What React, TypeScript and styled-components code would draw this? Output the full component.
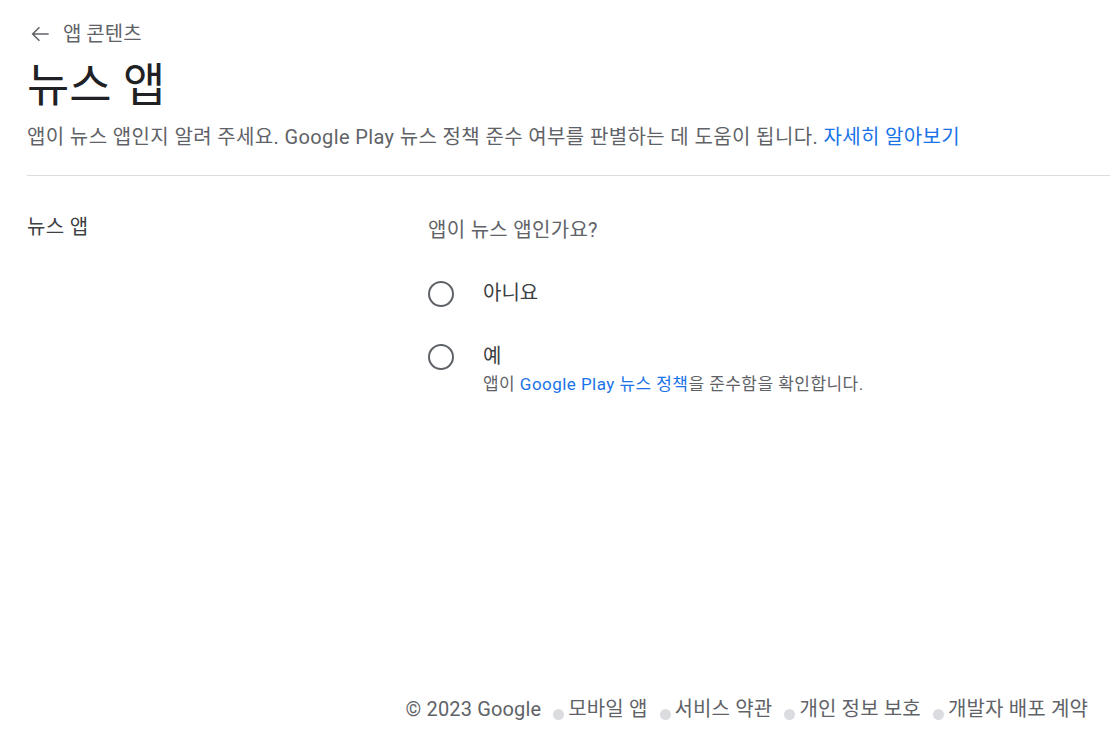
import React from "react";
import styled, { createGlobalStyle } from "styled-components";

const Global = createGlobalStyle`
  html, body { margin: 0; padding: 0; background: #fff; }
  body { font-family: Roboto, "Noto Sans CJK KR", sans-serif; color: #202124; }
  * { box-sizing: border-box; }
`;

const Page = styled.div`
  width: 1110px;
  height: 748px;
  display: flex;
  flex-direction: column;
  padding: 20px 0 0 27px;
`;

const Back = styled.a`
  display: flex;
  align-items: center;
  gap: 10px;
  color: #5f6368;
  font-size: 20px;
  line-height: 28px;
  text-decoration: none;
`;

const Title = styled.h1`
  margin: 9px 0 0;
  font-size: 46px;
  font-weight: 400;
  line-height: 56px;
  color: #202124;
`;

const Desc = styled.p`
  margin: 10px 0 0;
  font-size: 20px;
  line-height: 28px;
  letter-spacing: 0.37px;
  color: #5f6368;
`;

const Link = styled.a`
  color: #1a73e8;
  text-decoration: none;
`;

const Divider = styled.hr`
  margin: 24px 0 0;
  border: none;
  border-top: 1px solid #dadce0;
`;

const Section = styled.div`
  display: grid;
  grid-template-columns: 401px 1fr;
  padding-top: 37px;
`;

const Label = styled.div`
  font-size: 20px;
  line-height: 28px;
  letter-spacing: 0.3px;
  color: #3c4043;
`;

const Question = styled.div`
  font-size: 20px;
  line-height: 28px;
  letter-spacing: 0.3px;
  color: #5f6368;
  padding-top: 3px;
`;

const Options = styled.div`
  display: flex;
  flex-direction: column;
  gap: 36px;
  margin-top: 36px;
`;

const Option = styled.label`
  display: flex;
  align-items: flex-start;
  gap: 29px;
`;

const Circle = styled.span`
  width: 26px;
  height: 26px;
  border: 2px solid #5f6368;
  border-radius: 50%;
  flex: none;
  margin-top: 1px;
`;

const OptText = styled.div`
  display: flex;
  flex-direction: column;
`;

const OptLabel = styled.span`
  font-size: 20px;
  line-height: 26px;
  color: #3c4043;
`;

const OptHelp = styled.span`
  font-size: 17px;
  line-height: 20px;
  letter-spacing: 0.45px;
  color: #5f6368;
  margin-top: 5px;
`;

const Footer = styled.footer`
  margin-top: auto;
  display: flex;
  justify-content: flex-end;
  align-items: center;
  height: 28px;
  margin-bottom: 25px;
  padding-right: 22px;
  font-size: 20px;
  line-height: 28px;
  letter-spacing: 0.15px;
  color: #5f6368;
`;

const FootItem = styled.span``;

const Dot = styled.span`
  flex: none;
  width: 11px;
  height: 11px;
  border-radius: 50%;
  background: #dadce0;
  margin: 10px 4px 0 12px;
`;

const footerLinks = ["모바일 앱", "서비스 약관", "개인 정보 보호", "개발자 배포 계약"];

export default function App() {
  return (
    <>
      <Global />
      <Page>
        <Back href="#">
          <svg width="26" height="26" viewBox="0 0 24 24" fill="#5f6368">
            <path d="M20 11.25H6.87l5.1-5.1L11 5.2 4.2 12l6.8 6.8.97-.95-5.1-5.1H20v-1.5z" />
          </svg>
          앱 콘텐츠
        </Back>
        <Title>뉴스 앱</Title>
        <Desc>
          앱이 뉴스 앱인지 알려 주세요. Google Play 뉴스 정책 준수 여부를 판별하는 데 도움이 됩니다.{" "}
          <Link href="#">자세히 알아보기</Link>
        </Desc>
        <Divider />
        <Section>
          <Label>뉴스 앱</Label>
          <div>
            <Question>앱이 뉴스 앱인가요?</Question>
            <Options>
              <Option>
                <Circle />
                <OptText>
                  <OptLabel>아니요</OptLabel>
                </OptText>
              </Option>
              <Option>
                <Circle />
                <OptText>
                  <OptLabel>예</OptLabel>
                  <OptHelp>
                    앱이 <Link href="#">Google Play 뉴스 정책</Link>을 준수함을 확인합니다.
                  </OptHelp>
                </OptText>
              </Option>
            </Options>
          </div>
        </Section>
        <Footer>
          <FootItem>© 2023 Google</FootItem>
          {footerLinks.map((l) => (
            <React.Fragment key={l}>
              <Dot />
              <FootItem>{l}</FootItem>
            </React.Fragment>
          ))}
        </Footer>
      </Page>
    </>
  );
}
